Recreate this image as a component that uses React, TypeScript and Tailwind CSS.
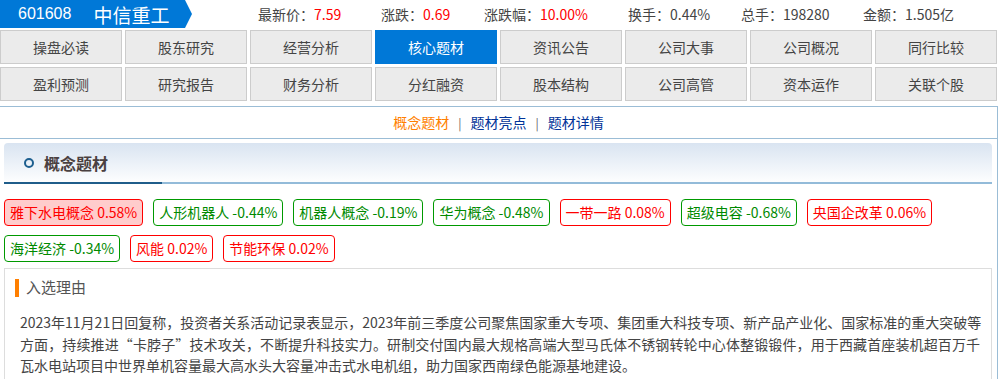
import React from "react";

const CJK = '"Noto Sans CJK SC", "Liberation Sans", sans-serif';

const stats: { label: string; value: string; red?: boolean; w: string }[] = [
  { label: "最新价：", value: "7.59", red: true, w: "w-[123px]" },
  { label: "涨跌：", value: "0.69", red: true, w: "w-[103px]" },
  { label: "涨跌幅：", value: "10.00%", red: true, w: "w-[144px]" },
  { label: "换手：", value: "0.44%", w: "w-[113px]" },
  { label: "总手：", value: "198280", w: "w-[122px]" },
  { label: "金额：", value: "1.505亿", w: "w-[120px]" },
];

const nav1 = ["操盘必读", "股东研究", "经营分析", "核心题材", "资讯公告", "公司大事", "公司概况", "同行比较"];
const nav2 = ["盈利预测", "研究报告", "财务分析", "分红融资", "股本结构", "公司高管", "资本运作", "关联个股"];

const tags1: { t: string; up: boolean; hl?: boolean }[] = [
  { t: "雅下水电概念 0.58%", up: true, hl: true },
  { t: "人形机器人 -0.44%", up: false },
  { t: "机器人概念 -0.19%", up: false },
  { t: "华为概念 -0.48%", up: false },
  { t: "一带一路 0.08%", up: true },
  { t: "超级电容 -0.68%", up: false },
  { t: "央国企改革 0.06%", up: true },
];
const tags2: { t: string; up: boolean; hl?: boolean }[] = [
  { t: "海洋经济 -0.34%", up: false },
  { t: "风能 0.02%", up: true },
  { t: "节能环保 0.02%", up: true },
];

function Tag({ t, up, hl }: { t: string; up: boolean; hl?: boolean }) {
  return (
    <span
      className={
        "h-[27px] flex items-center px-[5px] rounded-[4px] border text-[14px] whitespace-nowrap " +
        (up ? "border-[#ff0000] text-[#ff0000] " : "border-[#009900] text-[#008a00] ") +
        (hl ? "bg-[#ffcccc]" : "bg-white")
      }
    >
      {t}
    </span>
  );
}

function NavCell({ t }: { t: string }) {
  const active = t === "核心题材";
  return (
    <div
      className={
        "h-[34px] flex items-center justify-center text-[14px] border " +
        (active ? "bg-[#0078d7] border-[#0078d7] text-white" : "bg-[#ebebeb] border-[#cccccc] text-[#444]")
      }
    >
      {t}
    </div>
  );
}

export default function App() {
  return (
    <div className="w-[999px] h-[379px] overflow-hidden bg-white text-[#333]" style={{ fontFamily: CJK }}>
      {/* Header */}
      <div className="h-[28px] flex items-center">
        <div className="relative h-[28px] w-[183px] bg-[#0078d7] flex items-center text-white">
          <span className="ml-[18px] text-[16px] leading-none" style={{ fontFamily: '"Liberation Sans", sans-serif' }}>
            601608
          </span>
          <span className="ml-[22px] text-[19px] leading-none">中信重工</span>
          <svg className="absolute left-[182px] top-0" width="11" height="28" viewBox="0 0 11 28">
            <polygon points="0,0 3,0 10,14 3,28 0,28" fill="#0078d7" />
          </svg>
        </div>
        <div className="ml-[75px] flex items-center text-[14px]">
          {stats.map((s) => (
            <span key={s.label} className={s.w + " whitespace-nowrap text-[#444]"}>
              {s.label}
              <span className={s.red ? "text-[#ff0000]" : "text-[#444]"}>{s.value}</span>
            </span>
          ))}
        </div>
      </div>

      {/* Nav grid */}
      <div className="mt-[2px] w-[997px] grid grid-cols-8 gap-[3px]">
        {nav1.map((t) => (
          <NavCell key={t} t={t} />
        ))}
        {nav2.map((t) => (
          <NavCell key={t} t={t} />
        ))}
      </div>

      {/* Content */}
      <div className="mt-[5px] w-[998px] border-r border-[#9bbdd6]">
        <div className="h-[33px] border-t border-b border-[#9bbdd6] flex items-center justify-center text-[14px]">
          <span className="text-[#ff7f00]">概念题材</span>
          <span className="mx-[9px] text-[#666] text-[12px]">|</span>
          <span className="text-[#003399]">题材亮点</span>
          <span className="mx-[9px] text-[#666] text-[12px]">|</span>
          <span className="text-[#003399]">题材详情</span>
        </div>

        {/* Section title */}
        <div className="mt-[4px] ml-[4px] w-[988px] h-[41px] rounded-t-[4px] bg-gradient-to-b from-[#d9e4f1] to-[#ffffff] flex flex-col">
          <div className="flex-1 flex items-center">
            <span className="ml-[20px] w-[10px] h-[10px] rounded-full border-[2px] border-[#1d5f8f]" />
            <span className="ml-[10px] text-[16px] font-bold text-[#4a4040]">概念题材</span>
          </div>
          <div className="flex h-[2px]">
            <div className="w-[158px] bg-[#1f5d8a]" />
            <div className="flex-1 bg-[#93bbd9]" />
          </div>
        </div>

        {/* Tags */}
        <div className="mt-[15px] ml-[4px] flex flex-col gap-[9px]">
          <div className="flex gap-[10px]">
            {tags1.map((g) => (
              <Tag key={g.t} {...g} />
            ))}
          </div>
          <div className="flex gap-[10px]">
            {tags2.map((g) => (
              <Tag key={g.t} {...g} />
            ))}
          </div>
        </div>

        {/* Reason */}
        <div className="mt-[6px] ml-[4px] w-[988px] h-[140px] border border-[#dddddd] pl-[15px]">
          <div className="mt-[9px] flex items-center h-[19px] -ml-[5px]">
            <span className="w-[4px] h-[18px] bg-[#ff7f00]" />
            <span className="ml-[7px] text-[15px] text-[#555]">入选理由</span>
          </div>
          <div className="mt-[15px] text-[14px] leading-[21.5px] text-[#444]">
            <div className="w-[960px] whitespace-nowrap text-justify [text-align-last:justify]">
              2023年11月21日回复称，投资者关系活动记录表显示，2023年前三季度公司聚焦国家重大专项、集团重大科技专项、新产品产业化、国家标准的重大突破等
            </div>
            <div className="w-[960px] whitespace-nowrap text-justify [text-align-last:justify]">
              方面，持续推进“卡脖子”技术攻关，不断提升科技实力。研制交付国内最大规格高端大型马氏体不锈钢转轮中心体整锻锻件，用于西藏首座装机超百万千
            </div>
            <div className="whitespace-nowrap">
              瓦水电站项目中世界单机容量最大高水头大容量冲击式水电机组，助力国家西南绿色能源基地建设。
            </div>
          </div>
        </div>
      </div>
    </div>
  );
}
